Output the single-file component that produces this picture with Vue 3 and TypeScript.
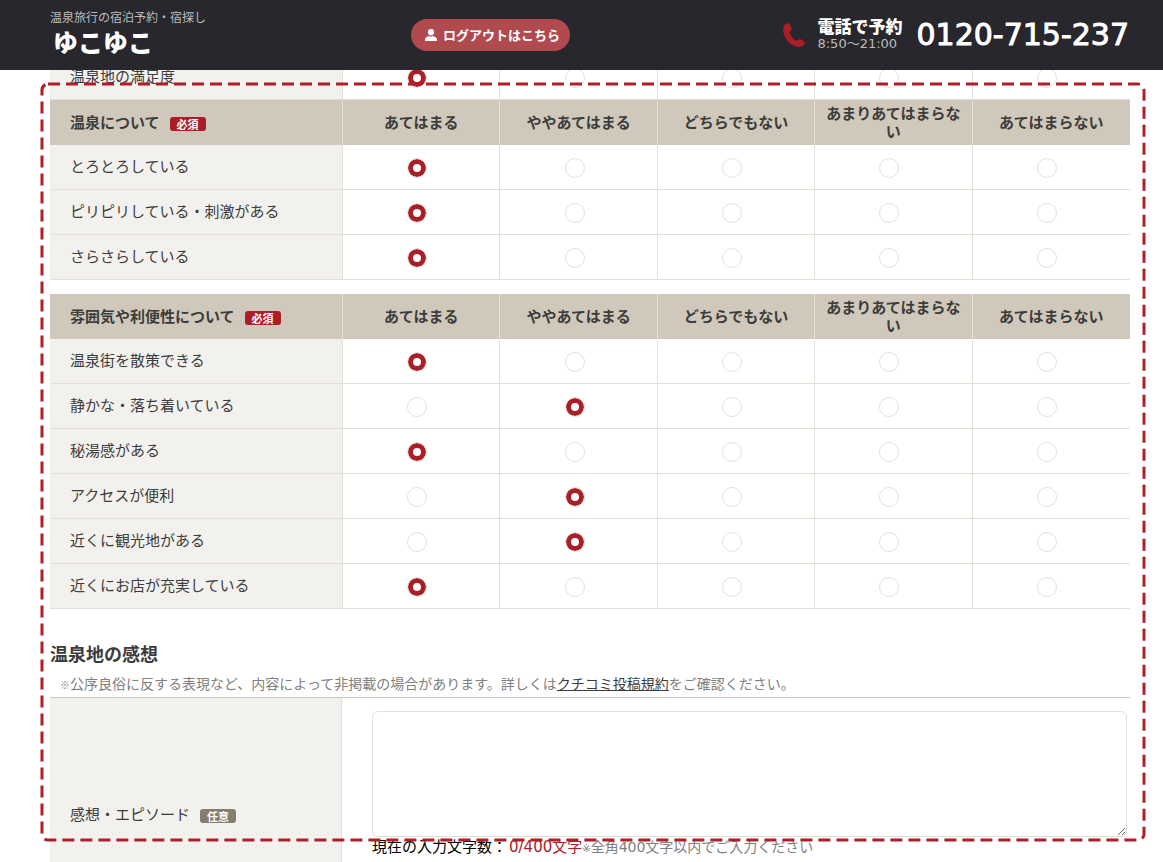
<script setup lang="ts">
import { computed, reactive, ref } from 'vue'

interface Question {
  id: string
  label: string
  answer: number
}

interface Group {
  id: string
  title: string
  questions: Question[]
}

const choices: string[] = ['あてはまる', 'ややあてはまる', 'どちらでもない', 'あまりあてはまらない', 'あてはまらない']

const satisfaction = reactive<Question>({ id: 'satisfaction', label: '温泉地の満足度', answer: 0 })

const groups = reactive<Group[]>([
  {
    id: 'spring',
    title: '温泉について',
    questions: [
      { id: 'smooth', label: 'とろとろしている', answer: 0 },
      { id: 'stimulating', label: 'ピリピリしている・刺激がある', answer: 0 },
      { id: 'silky', label: 'さらさらしている', answer: 0 },
    ],
  },
  {
    id: 'mood',
    title: '雰囲気や利便性について',
    questions: [
      { id: 'stroll', label: '温泉街を散策できる', answer: 0 },
      { id: 'quiet', label: '静かな・落ち着いている', answer: 1 },
      { id: 'secluded', label: '秘湯感がある', answer: 0 },
      { id: 'access', label: 'アクセスが便利', answer: 1 },
      { id: 'sights', label: '近くに観光地がある', answer: 1 },
      { id: 'shops', label: '近くにお店が充実している', answer: 0 },
    ],
  },
])

const comment = ref('')
const count = computed(() => comment.value.length)
</script>

<template>
  <div class="page">
    <header class="site-header">
      <div class="brand">
        <p class="tagline">温泉旅行の宿泊予約・宿探し</p>
        <a class="logo" href="#">ゆこゆこ</a>
      </div>
      <button class="logout" type="button">
        <svg class="user-icon" viewBox="0 0 12 12" aria-hidden="true">
          <circle cx="6" cy="3.2" r="3.1" />
          <path d="M0 12V10.6C0 8.6 2.6 7.4 4.2 7.1Q6 8.2 7.8 7.1C9.4 7.4 12 8.6 12 10.6V12Z" />
        </svg>
        ログアウトはこちら
      </button>
      <div class="tel">
        <svg class="tel-icon" viewBox="0 0 22 24" aria-hidden="true">
          <path d="M2.2 1.3C3.6.1 5.2-.2 6.1.7L8.6 4.9C9.2 6 9 6.8 8 7.6L6.5 8.8C6.2 9.5 7.1 11.6 8.6 13.4C10.2 15.6 12.3 17.5 13.7 17.7L15.5 16.5C16.5 15.7 17.2 15.7 18.2 16.5L21.3 18.6C22.2 19.3 22.1 20 21.4 21C19.6 23.5 16.6 24.4 13.4 23.6C8.6 22.4 3.7 17.8 1.5 12.9C-.4 8.6-.5 3.8 2.2 1.3Z" />
        </svg>
        <div class="tel-guide">
          <strong class="tel-title">電話で予約</strong>
          <span class="tel-hours">8:50～21:00</span>
        </div>
        <span class="tel-number">0120-715-237</span>
      </div>
    </header>

    <main class="content">
      <table class="survey lead">
        <colgroup>
          <col class="label-col" />
          <col v-for="choice in choices" :key="choice" />
        </colgroup>
        <tbody>
          <tr>
            <th class="question" scope="row">{{ satisfaction.label }}</th>
            <td v-for="(choice, i) in choices" :key="choice">
              <input v-model="satisfaction.answer" class="radio" type="radio" :name="satisfaction.id" :value="i" :aria-label="satisfaction.label + ' ' + choice" />
            </td>
          </tr>
        </tbody>
      </table>

      <table v-for="group in groups" :key="group.id" class="survey">
        <colgroup>
          <col class="label-col" />
          <col v-for="choice in choices" :key="choice" />
        </colgroup>
        <thead>
          <tr>
            <th class="group-title" scope="col">
              <span class="label-line">{{ group.title }}<span class="badge required">必須</span></span>
            </th>
            <th v-for="choice in choices" :key="choice" scope="col">{{ choice }}</th>
          </tr>
        </thead>
        <tbody>
          <tr v-for="question in group.questions" :key="question.id">
            <th class="question" scope="row">{{ question.label }}</th>
            <td v-for="(choice, i) in choices" :key="choice">
              <input v-model="question.answer" class="radio" type="radio" :name="question.id" :value="i" :aria-label="question.label + ' ' + choice" />
            </td>
          </tr>
        </tbody>
      </table>

      <h2 class="section-title">温泉地の感想</h2>
      <p class="notice"><span class="mark">※</span>公序良俗に反する表現など、内容によって非掲載の場合があります。詳しくは<a href="#">クチコミ投稿規約</a>をご確認ください。</p>

      <section class="comment">
        <div class="comment-label">
          <label class="label-line" for="comment">感想・エピソード<span class="badge optional">任意</span></label>
        </div>
        <div class="comment-body">
          <textarea id="comment" v-model="comment"></textarea>
          <p class="counter">
            <span>現在の入力文字数：</span>
            <span class="count">{{ count }}/400文字</span>
            <span class="limit"><span class="mark">※</span>全角400文字以内でご入力ください</span>
          </p>
        </div>
      </section>
    </main>

    <svg class="frame" aria-hidden="true">
      <rect x="2" y="2" rx="6" ry="6" />
    </svg>
  </div>
</template>

<style>
body {
  margin: 0;
  background: #fff;
}
</style>

<style scoped>
.page {
  position: relative;
  display: flex;
  flex-direction: column;
  box-sizing: border-box;
  min-height: 100vh;
  padding: 55px 33px 0 50px;
  color: #3c3c3c;
  font-family: "Noto Sans CJK JP", sans-serif;
  font-size: 15px;
  line-height: 18px;
}

p,
h2 {
  margin: 0;
}

.site-header {
  position: fixed;
  top: 0;
  left: 0;
  right: 0;
  z-index: 2;
  display: flex;
  align-items: center;
  box-sizing: border-box;
  height: 70px;
  padding: 0 34px 0 50px;
  background: #28272d;
  color: #fff;
}

.brand {
  flex: 0 0 361px;
  padding-bottom: 4px;
}

.tagline {
  color: #bdbdbd;
  font-size: 12px;
  line-height: 16px;
}

.logo {
  display: block;
  padding-left: 3px;
  color: #fff;
  font-size: 25px;
  font-weight: 900;
  line-height: 32px;
  text-decoration: none;
}

.logout {
  display: flex;
  align-items: center;
  gap: 6px;
  height: 32px;
  padding: 0 10px 0 14px;
  border: 0;
  border-radius: 16px;
  background: #b04a4f;
  color: #fff;
  font: bold 13px/18px "Noto Sans CJK JP", sans-serif;
  white-space: nowrap;
  cursor: pointer;
}

.user-icon {
  width: 12px;
  height: 12px;
  fill: #fff;
}

.tel {
  display: flex;
  align-items: center;
  margin-left: auto;
  white-space: nowrap;
}

.tel-icon {
  width: 22px;
  height: 24px;
  margin-right: 12px;
  fill: #ab1d27;
}

.tel-guide {
  display: flex;
  flex-direction: column;
  margin-right: 14px;
}

.tel-title {
  font-size: 17px;
  font-weight: 900;
  line-height: 18px;
}

.tel-hours {
  color: #bdbdbd;
  font-family: "DejaVu Sans", "Noto Sans CJK JP", sans-serif;
  font-size: 13px;
  line-height: 18px;
}

.tel-number {
  font-family: "DejaVu Sans", sans-serif;
  font-size: 30px;
  line-height: 36px;
  -webkit-text-stroke: 1px #fff;
}

.survey {
  width: 100%;
  margin-bottom: 14px;
  border-spacing: 0;
  table-layout: fixed;
}

.survey.lead {
  margin-bottom: 0;
}

.label-col {
  width: 293px;
}

.survey th,
.survey td {
  box-sizing: border-box;
  height: 45px;
  padding: 0 10px 2px;
  border-right: 1px solid #e3e1d7;
}

.survey th:last-child,
.survey td:last-child {
  border-right: 0;
}

.survey thead th {
  background: #d0c9bb;
  font-weight: bold;
  text-align: center;
}

.survey tbody th,
.survey tbody td {
  border-bottom: 1px solid #e3e1d7;
}

.survey td {
  padding: 2px 8px 0 0;
  text-align: center;
}

.survey tbody .question {
  padding-left: 20px;
  background: #f3f1ed;
  font-weight: normal;
  text-align: left;
}

.survey thead .group-title {
  padding-left: 20px;
  text-align: left;
}

.label-line {
  display: flex;
  align-items: center;
  gap: 10px;
}

.badge {
  margin-top: 4px;
  padding: 0 7px;
  border-radius: 3px;
  color: #fff;
  font-size: 11px;
  font-weight: bold;
  line-height: 14px;
}

.required {
  background: #ab1d27;
}

.optional {
  background: #857d6e;
}

.radio {
  display: inline-block;
  box-sizing: border-box;
  width: 20px;
  height: 20px;
  margin: 0;
  border: 1px solid #e3e1d7;
  border-radius: 50%;
  background: #fff;
  vertical-align: middle;
  appearance: none;
  cursor: pointer;
}

.radio:checked {
  box-shadow: inset 0 0 0 5px #ab1d27;
}

.content {
  display: flex;
  flex: 1;
  flex-direction: column;
}

.section-title {
  margin-top: 17px;
  font-size: 18px;
  line-height: 26px;
}

.notice {
  padding: 7px 0 2px 10px;
  color: #808080;
  font-size: 14px;
  line-height: 20px;
}

.notice a {
  color: #3c3c3c;
}

.mark {
  font-size: 10px;
}

.comment {
  display: flex;
  flex: 1;
  border-top: 1px solid #c8c8c0;
}

.comment-label {
  flex: 0 0 292px;
  box-sizing: border-box;
  padding: 107px 10px 0 20px;
  border-right: 1px solid #e3e1d7;
  background: #f3f1ed;
}

.comment-body {
  flex: 1;
  padding: 13px 3px 0 30px;
}

textarea {
  display: block;
  box-sizing: border-box;
  width: 100%;
  height: 126px;
  padding: 8px;
  border: 1px solid #e3e1d7;
  border-radius: 6px;
  background: #fff;
  color: #3c3c3c;
  font: 15px/20px "Noto Sans CJK JP", sans-serif;
  resize: vertical;
}

.counter {
  display: flex;
  align-items: baseline;
  color: #000;
  font-family: "DejaVu Sans", "Noto Sans CJK JP", sans-serif;
  line-height: 20px;
}

.count {
  margin-left: 2px;
  color: #ab1d27;
}

.limit {
  color: #808080;
  font-size: 14px;
}

.frame {
  position: absolute;
  top: 82px;
  left: 40px;
  z-index: 1;
  width: calc(100% - 57px);
  height: calc(100% - 102px);
  pointer-events: none;
}

.frame rect {
  width: calc(100% - 4px);
  height: calc(100% - 4px);
  fill: none;
  stroke: #b01e29;
  stroke-width: 3px;
  stroke-dasharray: 12 6;
}
</style>
